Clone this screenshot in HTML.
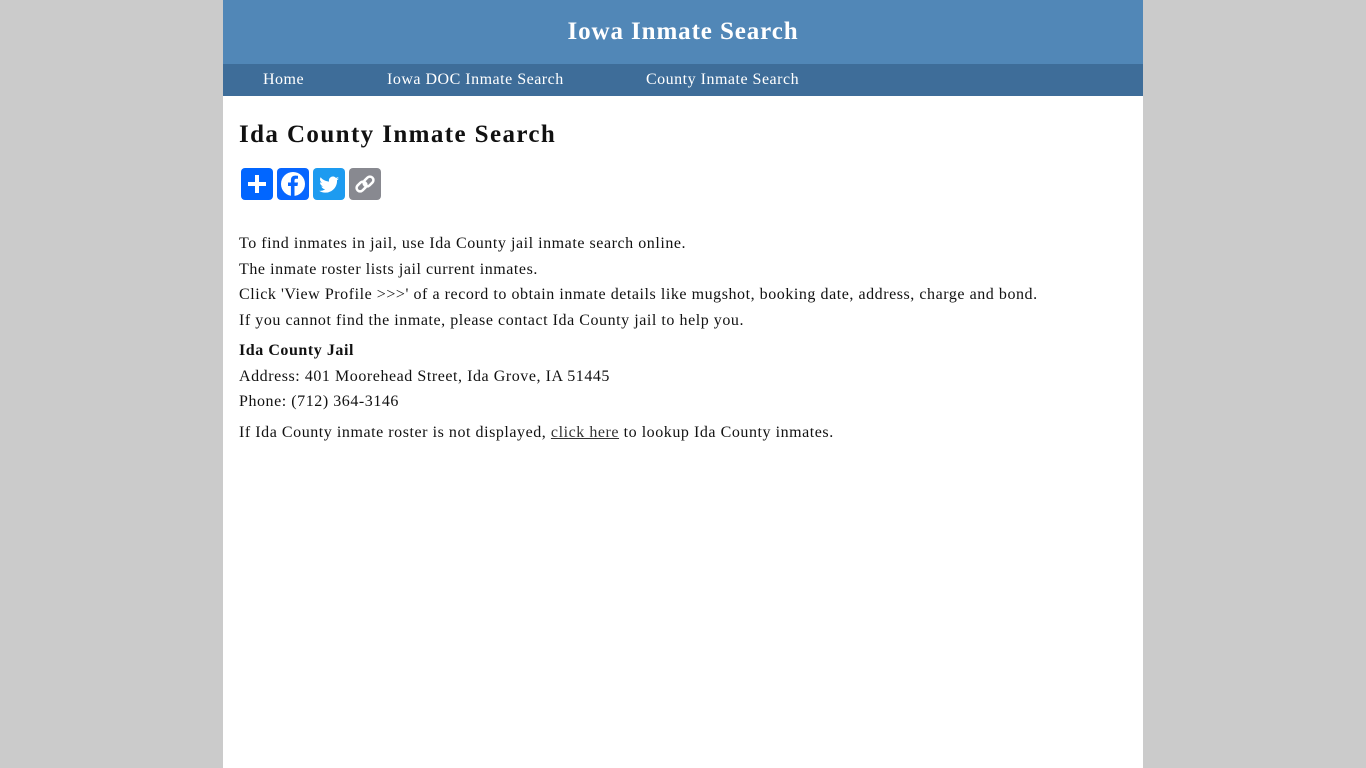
<!DOCTYPE html>
<html><head><meta charset="utf-8"><style>
html,body{margin:0;padding:0;background:#cbcbcb;height:768px;overflow:hidden}
body{font-family:"Liberation Serif",serif;}
.wrap{position:absolute;left:223px;top:0;width:920px;height:768px;background:#fff}
.hdr{height:64px;background:#5187b7;color:#fff;text-align:center;font-weight:bold;font-size:25px;line-height:64px;letter-spacing:.9px}
.nav{height:32px;background:#3e6d99;color:#fff;font-size:16px;line-height:32px;position:relative;letter-spacing:.5px}
.nav span{position:absolute;top:0}
.c{padding:0 16px;font-size:16px;letter-spacing:.55px;color:#111}
h1{margin:0;position:absolute;top:121px;left:16px;font-size:25px;letter-spacing:1.4px}
.sh{position:absolute;top:168px;left:18px;display:flex;gap:4px}
.sh div{width:32px;height:32px;border-radius:4px}
.t{position:absolute;left:16px;top:231px;line-height:25.5px;width:900px}
a{color:#333}
</style></head><body><div class="wrap">
<div class="hdr">Iowa Inmate Search</div>
<div class="nav"><span style="left:40px">Home</span><span style="left:164px">Iowa DOC Inmate Search</span><span style="left:423px">County Inmate Search</span></div>
<div class="c">
<h1>Ida County Inmate Search</h1>
<div class="sh">
<div style="background:#0166ff"><svg width="32" height="32"><path d="M16 7v18M7 16h18" stroke="#fff" stroke-width="4"/></svg></div>
<div style="background:#0866ff"><svg width="32" height="32"><circle cx="16" cy="16" r="12" fill="#fff"/><path d="M17.5 28V18h3l.5-3.5h-3.5v-2c0-1 .4-1.7 1.8-1.7H21V7.8c-.4 0-1.5-.2-2.7-.2-2.7 0-4.4 1.6-4.4 4.5v2.4H11V18h2.9v10z" fill="#0866ff"/></svg></div>
<div style="background:#1d9bf0"><svg width="32" height="32"><path d="M26 10.5c-.7.3-1.5.5-2.3.6.8-.5 1.5-1.3 1.8-2.2-.8.5-1.7.8-2.6 1a4 4 0 0 0-6.9 3.7c-3.4-.2-6.4-1.8-8.4-4.3-1.1 1.9-.5 4.2 1.3 5.4-.7 0-1.3-.2-1.9-.5 0 2 1.4 3.700 3.300 4.100-.6.2-1.2.2-1.9.1.5 1.600 2.100 2.800 3.800 2.800A8.300 8.300 0 0 1 6 22.700 11.600 11.600 0 0 0 24 12.300c.8-.5 1.500-1.200 2-1.800z" fill="#fff"/></svg></div>
<div style="background:#888990"><svg width="32" height="32" fill="none" stroke="#fff" stroke-width="2.5"><rect x="7" y="15" width="11" height="7" rx="3.5" transform="rotate(-45 12.5 18.5)"/><rect x="14" y="10" width="11" height="7" rx="3.5" transform="rotate(-45 19.5 13.5)"/></svg></div>
</div>
<div class="t">
To find inmates in jail, use Ida County jail inmate search online.<br>
The inmate roster lists jail current inmates.<br>
Click 'View Profile &gt;&gt;&gt;' of a record to obtain inmate details like mugshot, booking date, address, charge and bond.<br>
If you cannot find the inmate, please contact Ida County jail to help you.
<div style="margin-top:5px"><b>Ida County Jail</b><br>Address: 401 Moorehead Street, Ida Grove, IA 51445<br>Phone: (712) 364-3146</div>
<div style="margin-top:5px">If Ida County inmate roster is not displayed, <a href="#">click here</a> to lookup Ida County inmates.</div>
</div>
</div>
</div></body></html>
